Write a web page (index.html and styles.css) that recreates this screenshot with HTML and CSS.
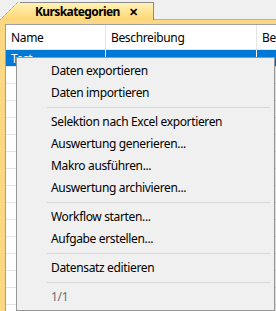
FILE: index.html
```html
<!DOCTYPE html>
<html lang="de">
<head>
  <meta charset="UTF-8" />
  <title>Kurskategorien</title>
  <link rel="stylesheet" href="styles.css">
</head>
<body>
  <div class="window">
    <div class="tabstrip">
      <div class="tab">
        <svg class="tab-corner" width="20" height="20" viewBox="0 0 20 20">
          <defs>
            <linearGradient id="tabgrad" x1="0" y1="0" x2="0" y2="1">
              <stop offset="0" stop-color="#fff3b8"/>
              <stop offset="1" stop-color="#ffd672"/>
            </linearGradient>
          </defs>
          <polygon points="0,20 18,2 20,2 20,20" fill="url(#tabgrad)"/>
          <line x1="0.5" y1="19.5" x2="18" y2="2" stroke="#8a8a8a" stroke-width="1" stroke-dasharray="1 1"/>
        </svg>
        <div class="tab-body">
          <span class="tab-title">Kurskategorien</span>
          <span class="tab-close">&#x2715;</span>
        </div>
      </div>
    </div>

    <div class="frame">
      <div class="grid">
        <div class="grid-head">
          <div class="col col-name">Name</div>
          <div class="col col-desc">Beschreibung</div>
          <div class="col col-more">Be</div>
        </div>
        <div class="grid-row selected">
          <div class="col col-name">Test</div>
          <div class="col col-desc"></div>
          <div class="col col-more"></div>
        </div>
        <div class="grid-row"><div class="col col-name"></div></div>
        <div class="grid-row"><div class="col col-name"></div></div>
        <div class="grid-row"><div class="col col-name"></div></div>
        <div class="grid-row"><div class="col col-name"></div></div>
        <div class="grid-row"><div class="col col-name"></div></div>
        <div class="grid-row"><div class="col col-name"></div></div>
        <div class="grid-row"><div class="col col-name"></div></div>
        <div class="grid-row"><div class="col col-name"></div></div>
        <div class="grid-row"><div class="col col-name"></div></div>
        <div class="grid-row"><div class="col col-name"></div></div>
        <div class="grid-row"><div class="col col-name"></div></div>
        <div class="grid-row"><div class="col col-name"></div></div>
        <div class="grid-row"><div class="col col-name"></div></div>
        <div class="grid-row"><div class="col col-name"></div></div>
      </div>

      <div class="menu">
        <div class="menu-item">Daten exportieren</div>
        <div class="menu-item">Daten importieren</div>
        <div class="menu-sep"></div>
        <div class="menu-item">Selektion nach Excel exportieren</div>
        <div class="menu-item">Auswertung generieren...</div>
        <div class="menu-item">Makro ausführen...</div>
        <div class="menu-item">Auswertung archivieren...</div>
        <div class="menu-sep"></div>
        <div class="menu-item">Workflow starten...</div>
        <div class="menu-item">Aufgabe erstellen...</div>
        <div class="menu-sep"></div>
        <div class="menu-item">Datensatz editieren</div>
        <div class="menu-sep"></div>
        <div class="menu-item disabled">1/1</div>
      </div>
    </div>
  </div>
</body>
</html>
```

FILE: styles.css
```css
body {
  margin: 0;
  background: #f0f0f0;
  font-family: 'Noto Sans', 'Open Sans', sans-serif;
  font-size: 12px;
  letter-spacing: -0.35px;
  color: #000;
  overflow: hidden;
}
.window {
  width: 276px;
  height: 311px;
  display: flex;
  flex-direction: column;
}
.tabstrip {
  height: 20px;
  display: flex;
  align-items: flex-end;
  border-bottom: 1px solid #c9b27a;
  background: #f0f0f0;
  box-sizing: border-box;
}
.tab {
  display: flex;
  height: 18px;
  position: relative;
  top: 1px;
}
.tab-corner {
  display: block;
  margin-top: -2px;
}
.tab-body {
  display: flex;
  align-items: center;
  gap: 9px;
  padding: 0 16px 0 15px;
  background: linear-gradient(#fff3b8, #ffd672);
  border-top: 1px solid #8a8a8a;
  border-right: 1px solid #8a8a8a;
}
.tab-title {
  font-weight: bold;
  font-size: 12px;
  letter-spacing: -0.6px;
}
.tab-close {
  font-size: 11px;
  font-weight: bold;
}
.frame {
  flex: 1;
  position: relative;
  background: #fcd883;
  padding: 4px 0 0 5px;
}
.grid {
  height: 100%;
  background: #fff;
  border-left: 1px solid #a0a0a0;
  border-top: 1px solid #a0a0a0;
  overflow: hidden;
}
.grid-head {
  display: flex;
  height: 24px;
  border-bottom: 1px solid #e5e5e5;
}
.grid-head .col {
  display: flex;
  align-items: center;
  padding-left: 5px;
}
.col {
  box-sizing: border-box;
  border-right: 1px solid #e5e5e5;
}
.col-name { width: 100px; }
.col-desc { width: 151px; }
.col-more { flex: 1; border-right: none; }
.grid-row {
  display: flex;
  height: 17px;
  border-bottom: 1px solid #e5e5e5;
  box-sizing: border-box;
}
.grid-row .col { height: 100%; padding-left: 5px; }
.grid-row.selected {
  background: #0078d7;
  color: #fff;
}
.grid-row.selected .col { border-right-color: #fff; }
.menu {
  position: absolute;
  left: 16px;
  top: 37px;
  width: 259px;
  height: 254px;
  background: #f0f0f0;
  border: 1px solid #979797;
  box-shadow: 1px 1px 1px rgba(0,0,0,0.15);
  padding: 2px 0 3px;
  box-sizing: border-box;
}
.menu-item {
  height: 22px;
  line-height: 22px;
  padding-left: 34px;
  white-space: nowrap;
}
.menu-item.disabled { color: #6d6d6d; }
.menu-sep {
  height: 1px;
  background: #d7d7d7;
  margin: 3px 4px 3px 30px;
}
```
